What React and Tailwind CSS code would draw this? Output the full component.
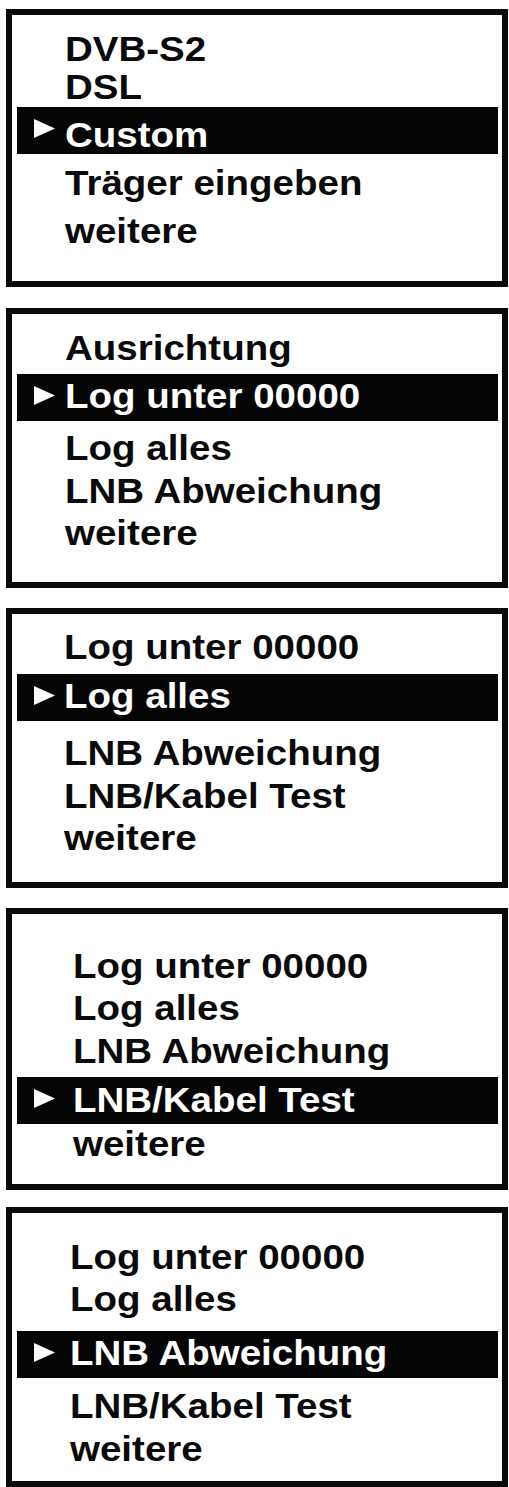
import React from "react";

// Five menu screens of a satellite finder, selected row shown inverted
const screens = [
  {
    box: "mt-[9px] h-[278px]",
    pt: "pt-[16px]",
    pl: "pl-[53px]",
    gap: "ml-[10px]",
    rows: [
      { text: "DVB-S2", mt: "mt-0" },
      { text: "DSL", mt: "mt-[2px]" },
      { text: "Custom", mt: "mt-[2px]", sel: true, pt: "pt-[10px]" },
      { text: "Träger eingeben", mt: "mt-[11px]" },
      { text: "weitere", mt: "mt-[12px]" },
    ],
  },
  {
    box: "mt-[21px] h-[280px]",
    pt: "pt-[16px]",
    pl: "pl-[53px]",
    gap: "ml-[10px]",
    rows: [
      { text: "Ausrichtung", mt: "mt-0" },
      { text: "Log unter 00000", mt: "mt-[8px]", sel: true, pt: "pt-[4px]" },
      { text: "Log alles", mt: "mt-[9px]" },
      { text: "LNB Abweichung", mt: "mt-[7px]" },
      { text: "weitere", mt: "mt-[6px]" },
    ],
  },
  {
    box: "mt-[20px] h-[280px]",
    pt: "pt-[15px]",
    pl: "pl-[52px]",
    gap: "ml-[9px]",
    rows: [
      { text: "Log unter 00000", mt: "mt-0" },
      { text: "Log alles", mt: "mt-[9px]", sel: true, pt: "pt-[4px]" },
      { text: "LNB Abweichung", mt: "mt-[14px]" },
      { text: "LNB/Kabel Test", mt: "mt-[7px]" },
      { text: "weitere", mt: "mt-[6px]" },
    ],
  },
  {
    box: "mt-[20px] h-[282px]",
    pt: "pt-[34px]",
    pl: "pl-[61px]",
    gap: "ml-[18px]",
    rows: [
      { text: "Log unter 00000", mt: "mt-0" },
      { text: "Log alles", mt: "mt-[6px]" },
      { text: "LNB Abweichung", mt: "mt-[7px]" },
      { text: "LNB/Kabel Test", mt: "mt-[8px]", sel: true, pt: "pt-[5px]" },
      { text: "weitere", mt: "mt-[2px]" },
    ],
  },
  {
    box: "mt-[17px] h-[280px]",
    pt: "pt-[26px]",
    pl: "pl-[58px]",
    gap: "ml-[15px]",
    rows: [
      { text: "Log unter 00000", mt: "mt-0" },
      { text: "Log alles", mt: "mt-[6px]" },
      { text: "LNB Abweichung", mt: "mt-[14px]", sel: true, pt: "pt-[4px]" },
      { text: "LNB/Kabel Test", mt: "mt-[10px]" },
      { text: "weitere", mt: "mt-[7px]" },
    ],
  },
];

function Arrow() {
  return (
    <svg width="21" height="19" viewBox="0 0 21 19" className="mt-[12px] shrink-0">
      <polygon points="0,0 21,9.5 0,19" fill="#fff" />
    </svg>
  );
}

// the LCD lettering is a little wider than Arial, so stretch it sideways
function Label({ children }) {
  return <span className="inline-block origin-left scale-x-[1.1] whitespace-nowrap">{children}</span>;
}

function Screen({ s }) {
  return (
    <div className={`${s.box} w-[502px] border-[6px] border-[#0a0a0a] bg-white flex flex-col ${s.pt}`}>
      {s.rows.map((r, i) =>
        r.sel ? (
          <div
            key={i}
            className={`${r.mt} ml-[5px] mr-[4px] h-[47px] bg-[#050505] text-white flex items-start pl-[17px]`}
          >
            <Arrow />
            <div className={`${s.gap} ${r.pt} leading-[36px]`}>
              <Label>{r.text}</Label>
            </div>
          </div>
        ) : (
          <div key={i} className={`${r.mt} ${s.pl} h-[36px] leading-[36px] text-[#0a0a0a]`}>
            <Label>{r.text}</Label>
          </div>
        )
      )}
    </div>
  );
}

export default function App() {
  return (
    <div
      className="w-[509px] h-[1487px] overflow-hidden bg-white pl-[6px] flex flex-col text-[35px] font-bold"
      style={{ fontFamily: '"Liberation Sans", Arial, sans-serif' }}
    >
      {screens.map((s, i) => (
        <Screen key={i} s={s} />
      ))}
    </div>
  );
}
